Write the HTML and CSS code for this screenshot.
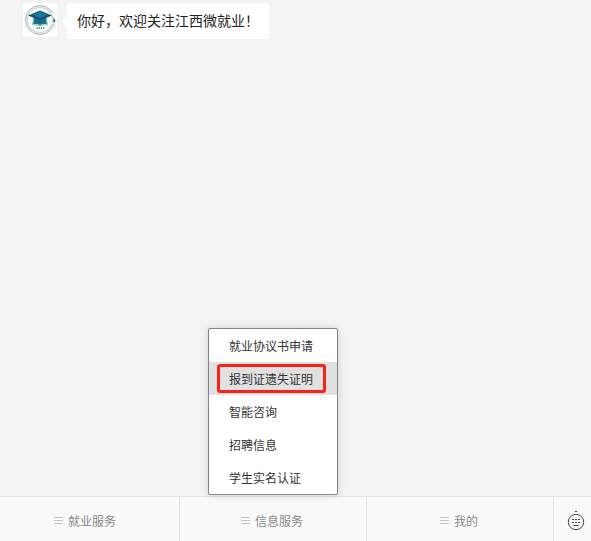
FILE: index.html
```
<!DOCTYPE html>
<html lang="zh-CN">
<head>
	<meta charset="UTF-8">
	<meta name="viewport" content="width=device-width, initial-scale=1.0">
	<title>江西微就业</title>
	<link rel="stylesheet" href="styles.css">
</head>
<body>
<div class="chat">
	<div class="messages">
		<div class="message">
			<svg class="avatar" viewBox="0 0 34 34" aria-hidden="true">
				<rect width="34" height="34" rx="2" fill="#fff"/>
				<circle cx="17" cy="17" r="14.5" fill="none" stroke="#a9b6bb" stroke-width="1"/>
				<circle cx="17" cy="17" r="12.7" fill="none" stroke="#b9c5c9" stroke-width="1.6" stroke-dasharray="1.2 .7"/>
				<path d="M28 9l6 5v5l-5-3z" fill="#fff"/>
				<path d="M9.500 19.500q4-.5 7.500 1.500 3.500-2 7.500-1.500v2.500q-4-.5-7.500 1-3.500-1.500-7.500-1z" fill="#d7efc8" stroke="#63b58a" stroke-width=".7"/>
				<path d="M10.500 13h13v8q-4-.5-6.500 1-2.500-1.500-6.500-1z" fill="#176f91"/>
				<path d="M17 7.500L29 12.500 17 17.500 5 12.500z" fill="#12567f"/>
				<path d="M17 8.500L25 12l-8 3-8-3z" fill="#1b7895"/>
				<path d="M28.500 12.500l2.500 4" fill="none" stroke="#3f7891" stroke-width=".6"/>
				<path d="M31 15.500l1 3h-1.500zM32 17.500l1 1" fill="#164f77" stroke="#164f77" stroke-width=".5"/>
				<path d="M13.500 25h8" stroke="#56707e" stroke-width="1.6" stroke-dasharray="1.4 .8"/>
			</svg>
			<p class="bubble">你好，欢迎关注江西微就业！</p>
		</div>
	</div>
	<nav class="bar">
		<div class="cell">
			<button type="button" class="tab"><i class="lines"></i>就业服务</button>
		</div>
		<div class="cell">
			<ul class="menu">
				<li><a href="#">就业协议书申请</a></li>
				<li><a href="#" class="active">报到证遗失证明</a></li>
				<li><a href="#">智能咨询</a></li>
				<li><a href="#">招聘信息</a></li>
				<li><a href="#">学生实名认证</a></li>
			</ul>
			<button type="button" class="tab"><i class="lines"></i>信息服务</button>
		</div>
		<div class="cell">
			<button type="button" class="tab"><i class="lines"></i>我的</button>
		</div>
		<button type="button" class="keyboard" aria-label="键盘">
			<svg width="18" height="22" viewBox="0 0 18 22" aria-hidden="true">
				<path d="M7.500 2L9 .5 10.500 2z" fill="#444"/>
				<circle cx="9" cy="12" r="7.700" fill="none" stroke="#444" stroke-width="1"/>
				<path d="M5 9.500h2M8 9.500h2M11 9.500h2M5 12.500h2M8 12.500h2M11 12.500h2M6.500 15.500h5" stroke="#444" stroke-width="1.200"/>
			</svg>
		</button>
	</nav>
</div>
</body>
</html>
```
FILE: styles.css
```
* {
	box-sizing: border-box;
}
body {
	margin: 0;
	background: #f4f4f4;
	color: #222;
	font-family: "Noto Sans CJK SC", sans-serif;
}
button {
	padding: 0;
	border: 0;
	background: none;
	font-family: inherit;
	cursor: pointer;
}
.chat {
	display: flex;
	flex-direction: column;
	height: 100vh;
	overflow: hidden;
}
.messages {
	flex: 1;
	padding: 3px 23px;
}
.message {
	display: flex;
	align-items: flex-start;
	gap: 10px;
}
.avatar {
	width: 34px;
	height: 34px;
}
.bubble {
	position: relative;
	margin: 0;
	padding: 5px 10px 7px;
	border-radius: 4px;
	background: #fff;
	font-size: 14px;
	line-height: 24px;
}
.bubble::before {
	content: "";
	position: absolute;
	top: 12px;
	left: -5px;
	border: 6px solid transparent;
	border-left: 0;
	border-right: 5px solid #fff;
}

/* bottom bar */
.bar {
	display: grid;
	grid-template-columns: repeat(3, 1fr) 37px;
	height: 45px;
	margin-left: -7px;
	border-top: 1px solid #e3e3e3;
	background: #fafafa;
}
.cell {
	position: relative;
	display: flex;
	border-right: 1px solid #e3e3e3;
}
.tab {
	flex: 1;
	display: flex;
	align-items: center;
	justify-content: center;
	gap: 5px;
	padding-top: 3px;
	padding-right: 2px;
	color: #888;
	font-size: 12px;
	line-height: 20px;
}
.lines {
	width: 9px;
	height: 7px;
	border-top: 1px solid #c4c4c4;
	border-bottom: 1px solid #c4c4c4;
	background: linear-gradient(#c4c4c4, #c4c4c4) center / 9px 1px no-repeat;
}
.keyboard {
	display: flex;
	align-items: center;
	justify-content: center;
	padding-left: 6px;
	padding-top: 3px;
}

/* popup menu */
.menu {
	position: absolute;
	bottom: 100%;
	left: 50%;
	width: 130px;
	margin: 0 0 2px -65px;
	padding: 0;
	border: 1px solid #858585;
	border-radius: 2px;
	background: #fff;
	box-shadow: 0 0 8px rgba(0, 0, 0, .15);
	list-style: none;
}
.menu a {
	position: relative;
	display: block;
	padding: 0 20px;
	color: #333;
	font-size: 12px;
	line-height: 33px;
	text-decoration: none;
}
.menu .active {
	background: #e1e1e1;
}
.menu .active::after {
	content: "";
	position: absolute;
	top: 2px;
	right: 11px;
	bottom: 2px;
	left: 8px;
	border: 3px solid #fc2015;
	border-radius: 3px;
}
```
